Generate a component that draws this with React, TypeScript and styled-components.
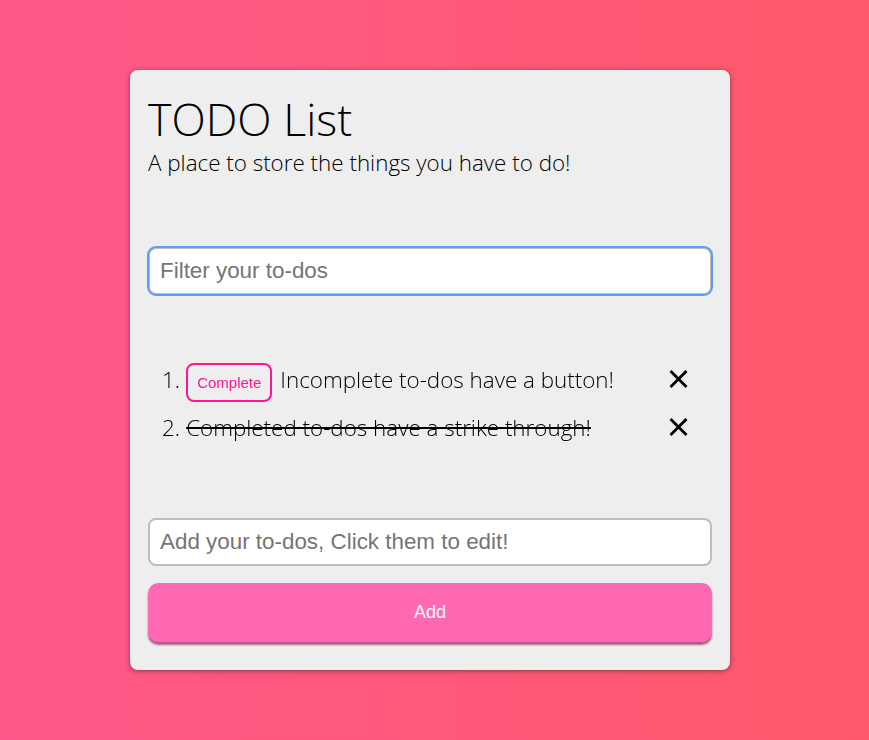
import styled, { createGlobalStyle } from "styled-components";

const GlobalStyle = createGlobalStyle`
  html, body {
    margin: 0;
    padding: 0;
  }
  body {
    min-height: 100vh;
    background: linear-gradient(90deg, #fd5889, #ff586c);
    font-family: "Open Sans", sans-serif;
  }
`;

type Todo = { id: number; text: string; done: boolean };

const todos: Todo[] = [
  { id: 1, text: "Incomplete to-dos have a button!", done: false },
  { id: 2, text: "Completed to-dos have a strike through!", done: true },
];

const CloseIcon = () => (
  <svg width="19" height="18" viewBox="0 0 19 18">
    <path d="M1.5 1 L17.5 17 M17.5 1 L1.5 17" stroke="#000" strokeWidth="2.8" />
  </svg>
);

const App: React.FC = () => {
  return (
    <>
      <GlobalStyle />
      <Page>
        <Card>
          <Title>TODO List</Title>
          <Subtitle>A place to store the things you have to do!</Subtitle>
          <FilterInput placeholder="Filter your to-dos" autoFocus />
          <List>
            {todos.map((todo, i) => (
              <Item key={todo.id}>
                <Num>{i + 1}.</Num>
                {!todo.done && <CompleteButton>Complete</CompleteButton>}
                <ItemText $done={todo.done}>{todo.text}</ItemText>
                <DeleteButton aria-label="delete">
                  <CloseIcon />
                </DeleteButton>
              </Item>
            ))}
          </List>
          <AddInput placeholder="Add your to-dos, Click them to edit!" />
          <AddButton>Add</AddButton>
        </Card>
      </Page>
    </>
  );
};

export default App;

const Page = styled.main`
  display: flex;
  justify-content: center;
  padding: 70px 9px 0 0;
`;

const Card = styled.section`
  width: 600px;
  box-sizing: border-box;
  padding: 22px 18px 28px;
  background-color: #eeeeee;
  border-radius: 8px;
  box-shadow: 0 1px 5px rgba(0, 0, 0, 0.45);
  display: flex;
  flex-direction: column;
`;

const Title = styled.h1`
  margin: 0;
  font-size: 44.8px;
  font-weight: 300;
  line-height: 1.2;
  color: #000;
`;

const Subtitle = styled.p`
  margin: 4px 0 0;
  font-size: 22.4px;
  font-weight: 300;
  line-height: 1.2;
  color: #000;
`;

const BaseInput = styled.input`
  width: 100%;
  box-sizing: border-box;
  font-family: "Liberation Sans", Arial, sans-serif;
  font-size: 22.4px;
  color: #222;
  background: #fff;
  border: 2px solid #bdbdbd;
  border-radius: 8px;
  padding: 0 10px;

  &::placeholder {
    color: #757575;
  }
`;

const FilterInput = styled(BaseInput)`
  margin-top: 70px;
  height: 48px;
  outline: 2px solid #5e9bf2;
  outline-offset: -1px;

  &:focus {
    outline: 2px solid #5e9bf2;
    outline-offset: -1px;
  }
`;

const List = styled.ol`
  list-style: none;
  margin: 68px 0 0;
  padding: 0;
  display: flex;
  flex-direction: column;
  gap: 10px;
`;

const Item = styled.li`
  display: flex;
  align-items: baseline;
  padding-left: 14px;
  font-size: 22.4px;
  font-weight: 300;
  color: #000;
`;

const Num = styled.span`
  margin-right: 6px;
`;

const CompleteButton = styled.button`
  font-family: "Liberation Sans", Arial, sans-serif;
  font-size: 15px;
  color: #ff1493;
  background: transparent;
  border: 2px solid #ff1493;
  border-radius: 8px;
  height: 39px;
  padding: 0 9px;
  margin-right: 8px;
  cursor: pointer;
`;

const ItemText = styled.span<{ $done: boolean }>`
  flex: 1;
  text-decoration: ${(p) => (p.$done ? "line-through" : "none")};
`;

const DeleteButton = styled.button`
  background: none;
  border: 0;
  padding: 0;
  margin-right: 24px;
  cursor: pointer;

  svg {
    display: block;
  }
`;

const AddInput = styled(BaseInput)`
  margin-top: 75px;
  height: 48px;
`;

const AddButton = styled.button`
  margin-top: 17px;
  height: 59px;
  width: 100%;
  font-family: "Liberation Sans", Arial, sans-serif;
  font-size: 18px;
  color: #fff;
  background-color: #ff69b4;
  border: 0;
  border-radius: 10px;
  box-shadow: 0 3px 2px rgba(150, 30, 90, 0.7);
  cursor: pointer;
`;
